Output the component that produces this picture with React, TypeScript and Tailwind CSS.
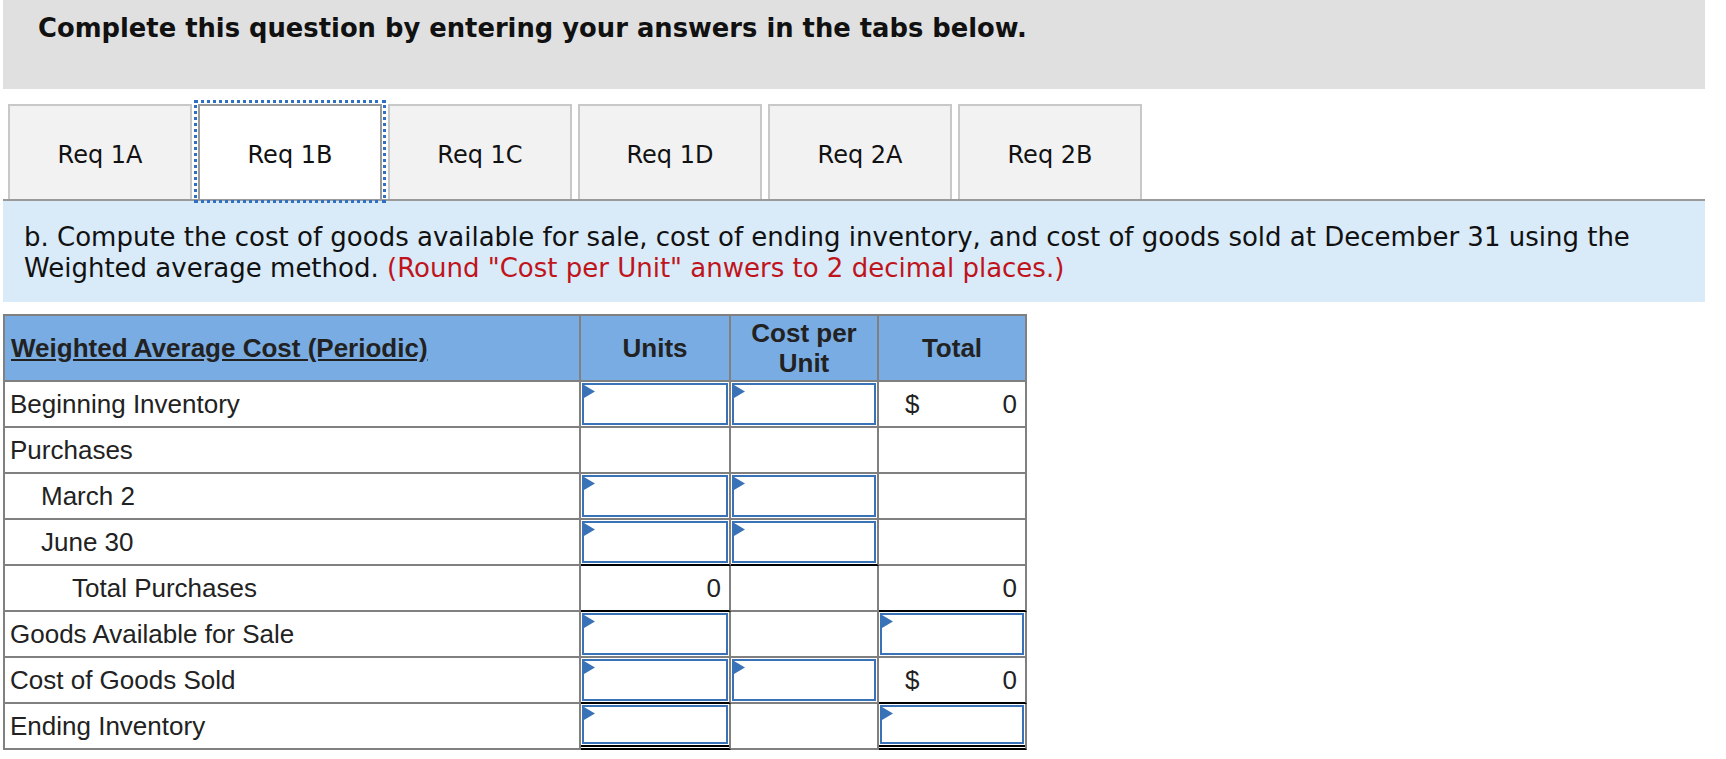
import React from 'react';

type Line = 'gray' | 'single' | 'double';

type CellSpec =
  | { kind: 'empty' }
  | { kind: 'input' }
  | { kind: 'value'; value: string; dollar?: boolean };

interface Row {
  label: string;
  indent: 0 | 1 | 2;
  units: CellSpec;
  cost: CellSpec;
  total: CellSpec;
  lines?: { units?: Line; cost?: Line; total?: Line };
}

const E: CellSpec = { kind: 'empty' };
const I: CellSpec = { kind: 'input' };

const rows: Row[] = [
  { label: 'Beginning Inventory', indent: 0, units: I, cost: I, total: { kind: 'value', value: '0', dollar: true } },
  { label: 'Purchases', indent: 0, units: E, cost: E, total: E },
  { label: 'March 2', indent: 1, units: I, cost: I, total: E },
  { label: 'June 30', indent: 1, units: I, cost: I, total: E, lines: { units: 'single', cost: 'single' } },
  {
    label: 'Total Purchases',
    indent: 2,
    units: { kind: 'value', value: '0' },
    cost: E,
    total: { kind: 'value', value: '0' },
    lines: { units: 'single', total: 'single' },
  },
  { label: 'Goods Available for Sale', indent: 0, units: I, cost: E, total: I },
  {
    label: 'Cost of Goods Sold',
    indent: 0,
    units: I,
    cost: I,
    total: { kind: 'value', value: '0', dollar: true },
    lines: { units: 'single', total: 'single' },
  },
  { label: 'Ending Inventory', indent: 0, units: I, cost: E, total: I, lines: { units: 'double', total: 'double' } },
];

const tabs = ['Req 1A', 'Req 1B', 'Req 1C', 'Req 1D', 'Req 2A', 'Req 2B'];

const indentClass = ['pl-[5px]', 'pl-[36px]', 'pl-[67px]'];

const AnswerInput = () => (
  <div className="relative m-px flex-1 border-2 border-[#3a72b8] bg-white">
    <svg className="absolute left-0 top-0" width="11" height="13" viewBox="0 0 11 13">
      <polygon points="0,0 11,6.5 0,13" fill="#3a72b8" />
    </svg>
  </div>
);

const DataCell = ({ spec, line = 'gray' }: { spec: CellSpec; line?: Line }) => {
  const bottom = line === 'gray' ? 'border-b-[#808080]' : 'border-b-black';
  return (
    <div className={`flex h-[46px] flex-col border-r-2 border-b-2 border-r-[#808080] ${bottom}`}>
      {spec.kind === 'input' && <AnswerInput />}
      {spec.kind === 'empty' && <div className="flex-1" />}
      {spec.kind === 'value' && (
        <div
          className={`flex flex-1 items-center pr-[8px] ${
            spec.dollar ? 'justify-between pl-[26px]' : 'justify-end'
          }`}
        >
          {spec.dollar && <span>$</span>}
          <span>{spec.value}</span>
        </div>
      )}
      {line === 'double' && <div className="mb-px h-[2px] bg-black" />}
    </div>
  );
};

export default function App() {
  return (
    <div className="h-[759px] w-[1726px] overflow-hidden bg-white pl-[3px] font-['DejaVu_Sans',Verdana,sans-serif] text-[#111]">
      <div className="w-[1702px]">
        {/* instructions header */}
        <div className="h-[89px] bg-[#e0e0e0] pl-[35px] pt-[13px] text-[25.8px] font-bold leading-[30px]">
          Complete this question by entering your answers in the tabs below.
        </div>

        {/* tabs */}
        <div className="mt-[15px] flex gap-[6px] pl-[5px]">
          {tabs.map((t) => {
            const active = t === 'Req 1B';
            return (
              <div
                key={t}
                className={`relative flex h-[95px] w-[184px] items-center justify-center border-2 border-b-0 pt-[4px] text-[24px] ${
                  active
                    ? 'z-10 border-[#9a9a9a] bg-white outline-[3px] outline-offset-[1px] outline-[#2f6fc4] outline-dotted'
                    : 'border-[#c8c8c8] bg-[#f2f2f2]'
                }`}
              >
                {t}
              </div>
            );
          })}
        </div>

        {/* question text */}
        <div className="h-[103px] border-t-2 border-[#9a9a9a] bg-[#d9eaf8] pl-[21px] pt-[21px] text-[26px] leading-[30.8px]">
          b. Compute the cost of goods available for sale, cost of ending inventory, and cost of goods sold at December
          31 using the
          <br />
          Weighted average method.{' '}
          <span className="text-[#c0141c]">(Round "Cost per Unit" anwers to 2 decimal places.)</span>
        </div>

        {/* worksheet */}
        <div className="mt-[12px] grid w-[1024px] grid-cols-[576px_150px_148px_148px] border-t-2 border-l-2 border-[#808080] font-['Liberation_Sans',Arial,sans-serif] text-[26px] leading-[30px] text-[#222]">
          <div className="flex h-[66px] items-center border-r-2 border-b-2 border-[#808080] bg-[#79ace3] pl-[6px] font-bold underline">
            Weighted Average Cost (Periodic)
          </div>
          <div className="flex h-[66px] items-center justify-center border-r-2 border-b-2 border-[#808080] bg-[#79ace3] font-bold">
            Units
          </div>
          <div className="flex h-[66px] items-center justify-center border-r-2 border-b-2 border-[#808080] bg-[#79ace3] text-center font-bold">
            Cost per
            <br />
            Unit
          </div>
          <div className="flex h-[66px] items-center justify-center border-r-2 border-b-2 border-[#808080] bg-[#79ace3] font-bold">
            Total
          </div>

          {rows.map((r) => (
            <React.Fragment key={r.label}>
              <div
                className={`flex h-[46px] items-center border-r-2 border-b-2 border-[#808080] ${indentClass[r.indent]}`}
              >
                {r.label}
              </div>
              <DataCell spec={r.units} line={r.lines?.units} />
              <DataCell spec={r.cost} line={r.lines?.cost} />
              <DataCell spec={r.total} line={r.lines?.total} />
            </React.Fragment>
          ))}
        </div>
      </div>
    </div>
  );
}
